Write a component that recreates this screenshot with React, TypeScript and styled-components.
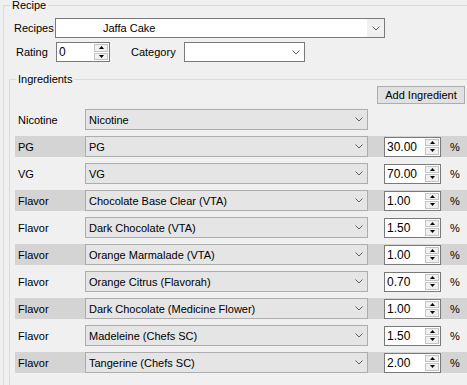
import React from "react";
import styled, { createGlobalStyle } from "styled-components";

const Global = createGlobalStyle`
  html, body { margin: 0; padding: 0; background: #f0f0f0; }
  body { font-family: "Liberation Sans", Arial, sans-serif; font-size: 11px; color: #000; }
`;

const Window = styled.div`
  width: 467px;
  height: 385px;
  overflow: hidden;
  background: #f0f0f0;
`;

const Group = styled.fieldset<{ $top: number; $left: number; $padTop: number }>`
  margin: ${(p) => p.$top}px 0 0 ${(p) => p.$left}px;
  padding: ${(p) => p.$padTop}px 0 0 0;
  border: 1px solid #dcdcdc;
  min-width: 0;
  width: 520px;
  height: 420px;
  box-sizing: border-box;
`;

const Caption = styled.legend`
  margin-left: 6px;
  padding: 0 2px;
  font-size: 11px;
  line-height: 9px;
  height: 9px;
`;

const FormRow = styled.div<{ $top: number; $pad: number }>`
  display: flex;
  align-items: center;
  height: 20px;
  margin-top: ${(p) => p.$top}px;
  padding-left: ${(p) => p.$pad}px;
`;

const Label = styled.span<{ $w: number; $gap?: number }>`
  flex: none;
  width: ${(p) => p.$w}px;
  margin-left: ${(p) => p.$gap ?? 0}px;
  white-space: nowrap;
`;

const Combo = styled.div<{ $w: number; $h: number; $flat?: boolean }>`
  flex: none;
  box-sizing: border-box;
  width: ${(p) => p.$w}px;
  height: ${(p) => p.$h}px;
  display: flex;
  align-items: stretch;
  border: 1px solid ${(p) => (p.$flat ? "#adadad" : "#7a7a7a")};
  background: ${(p) => (p.$flat ? "#e5e5e5" : "#ffffff")};
`;

const ComboText = styled.span<{ $pad: number }>`
  flex: 1;
  display: flex;
  align-items: center;
  padding-left: ${(p) => p.$pad}px;
  white-space: nowrap;
  overflow: hidden;
`;

const ComboArrow = styled.span<{ $bg?: string }>`
  flex: none;
  width: 17px;
  display: flex;
  align-items: center;
  justify-content: center;
  background: ${(p) => p.$bg ?? "transparent"};
`;

const Chevron = () => (
  <svg width="8" height="5" viewBox="0 0 8 5">
    <path d="M0.5 0.5 L4 4 L7.5 0.5" fill="none" stroke="#5f5f5f" strokeWidth="1" />
  </svg>
);

const Numeric = styled.div<{ $w: number }>`
  flex: none;
  box-sizing: border-box;
  width: ${(p) => p.$w}px;
  height: 20px;
  display: flex;
  align-items: stretch;
  border: 1px solid #7a7a7a;
  background: #fff;
`;

const NumText = styled.span`
  flex: 1;
  display: flex;
  align-items: center;
  padding-left: 2px;
  font-size: 12px;
`;

const Spin = styled.div`
  flex: none;
  width: 14px;
  margin: 1px 1px 1px 0;
  display: flex;
  flex-direction: column;
  gap: 1px;
`;

const SpinBtn = styled.span`
  flex: 1;
  display: flex;
  align-items: center;
  justify-content: center;
  background: #f0f0f0;
  border: 1px solid #c4c4c4;
`;

const Tri = ({ up }: { up?: boolean }) => (
  <svg width="5" height="3" viewBox="0 0 5 3">
    <path d={up ? "M0 3 L2.5 0 L5 3 Z" : "M0 0 L5 0 L2.5 3 Z"} fill="#000" />
  </svg>
);

const SpinBox = ({ value, w }: { value: string; w: number }) => (
  <Numeric $w={w}>
    <NumText>{value}</NumText>
    <Spin>
      <SpinBtn>
        <Tri up />
      </SpinBtn>
      <SpinBtn>
        <Tri />
      </SpinBtn>
    </Spin>
  </Numeric>
);

const Toolbar = styled.div`
  display: flex;
  padding-left: 367px;
`;

const Button = styled.div`
  box-sizing: border-box;
  width: 88px;
  height: 18px;
  display: flex;
  align-items: center;
  justify-content: center;
  background: #e1e1e1;
  border: 1px solid #adadad;
  white-space: nowrap;
`;

const List = styled.div`
  display: flex;
  flex-direction: column;
  gap: 6px;
  margin-top: 5px;
  margin-left: 5px;
`;

const IngRow = styled.div<{ $shaded: boolean }>`
  display: flex;
  align-items: center;
  height: 21px;
  padding-left: 3px;
  background: ${(p) => (p.$shaded ? "#d4d4d4" : "transparent")};
`;

const Percent = styled.span`
  margin-left: 9px;
  font-size: 11px;
`;

const Gap = styled.span<{ $w: number }>`
  flex: none;
  width: ${(p) => p.$w}px;
`;

type Ing = { kind: string; name: string; pct?: string };

const ingredients: Ing[] = [
  { kind: "Nicotine", name: "Nicotine" },
  { kind: "PG", name: "PG", pct: "30.00" },
  { kind: "VG", name: "VG", pct: "70.00" },
  { kind: "Flavor", name: "Chocolate Base Clear (VTA)", pct: "1.00" },
  { kind: "Flavor", name: "Dark Chocolate (VTA)", pct: "1.50" },
  { kind: "Flavor", name: "Orange Marmalade (VTA)", pct: "1.00" },
  { kind: "Flavor", name: "Orange Citrus (Flavorah)", pct: "0.70" },
  { kind: "Flavor", name: "Dark Chocolate (Medicine Flower)", pct: "1.00" },
  { kind: "Flavor", name: "Madeleine (Chefs SC)", pct: "1.50" },
  { kind: "Flavor", name: "Tangerine (Chefs SC)", pct: "2.00" },
];

export default function App() {
  return (
    <Window>
      <Global />
      <Group $top={1} $left={3} $padTop={8}>
        <Caption>Recipe</Caption>
        <FormRow $top={0} $pad={10}>
          <Label $w={41}>Recipes</Label>
          <Combo $w={330} $h={20}>
            <ComboText $pad={47}>Jaffa Cake</ComboText>
            <ComboArrow $bg="#f0f0f0">
              <Chevron />
            </ComboArrow>
          </Combo>
        </FormRow>
        <FormRow $top={4} $pad={12}>
          <Label $w={40}>Rating</Label>
          <SpinBox value="0" w={54} />
          <Label $w={53} $gap={21}>
            Category
          </Label>
          <Combo $w={121} $h={20}>
            <ComboText $pad={2}></ComboText>
            <ComboArrow>
              <Chevron />
            </ComboArrow>
          </Combo>
        </FormRow>
        <Group $top={13} $left={5} $padTop={2}>
          <Caption>Ingredients</Caption>
          <Toolbar>
            <Button>Add Ingredient</Button>
          </Toolbar>
          <List>
            {ingredients.map((ing, i) => (
              <IngRow key={i} $shaded={i % 2 === 1}>
                <Label $w={67}>{ing.kind}</Label>
                <Combo $w={283} $h={21} $flat>
                  <ComboText $pad={3}>{ing.name}</ComboText>
                  <ComboArrow>
                    <Chevron />
                  </ComboArrow>
                </Combo>
                {ing.pct && (
                  <>
                    <Gap $w={16} />
                    <SpinBox value={ing.pct} w={57} />
                    <Percent>%</Percent>
                  </>
                )}
              </IngRow>
            ))}
          </List>
        </Group>
      </Group>
    </Window>
  );
}
